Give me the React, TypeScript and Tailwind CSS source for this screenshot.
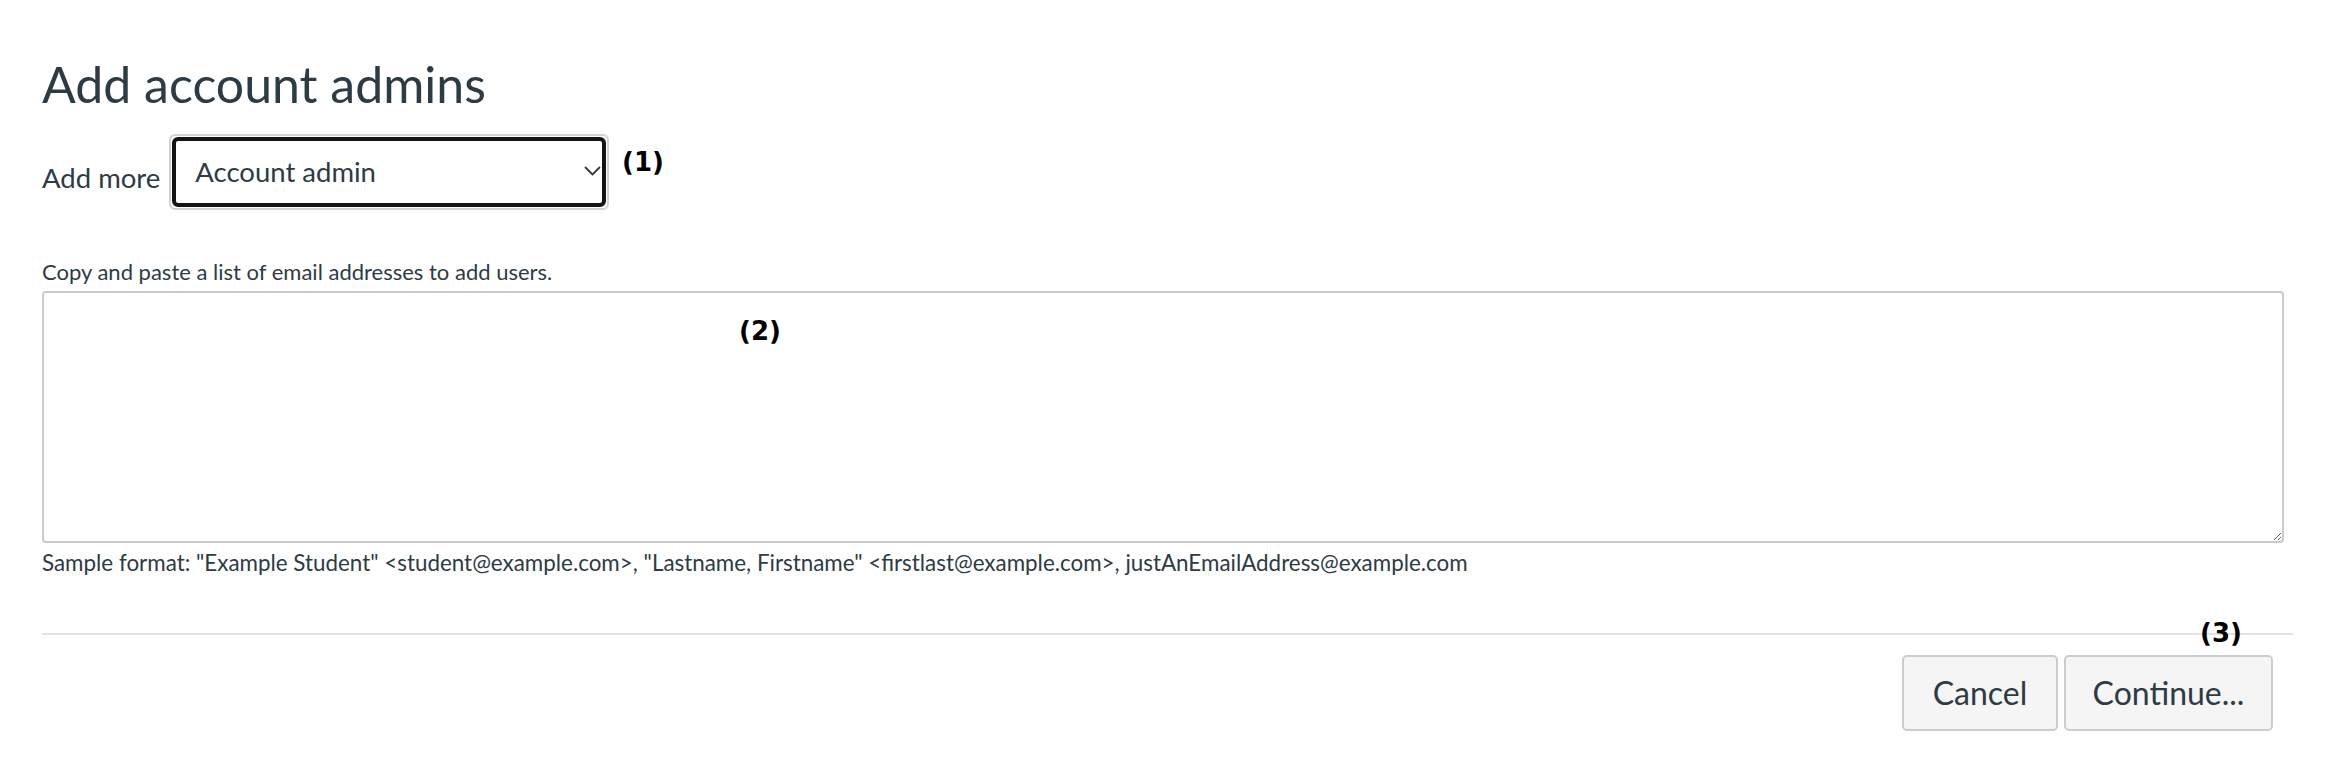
import React from "react";

export default function App() {
  const lato = { fontFamily: "Lato, 'Noto Sans', sans-serif" };
  const dejavu = { fontFamily: "'DejaVu Sans', sans-serif" };
  return (
    <div
      className="relative w-[2328px] h-[766px] bg-white pl-[42px] pt-[54px] text-[#2d3b45]"
      style={lato}
    >
      <h1 className="text-[50px] leading-[60px] font-normal">Add account admins</h1>

      <div className="flex items-start mt-[20px]">
        <span className="text-[27.5px] leading-[32px] mt-[28px]">Add more</span>
        <div className="ml-[9px] w-[440px] h-[76px] border-2 border-[#d2d2d2] rounded-[6px] p-[1px]">
          <div className="h-full border-[4px] border-[#141414] rounded-[6px] flex items-center justify-between pl-[19px] pr-[1px]">
            <span className="text-[27.5px] leading-[32px]">Account admin</span>
            <svg width="17" height="10" viewBox="0 0 17 10" className="mt-[-2px]">
              <path d="M1 1 L8.5 8.5 L16 1" fill="none" stroke="#2d3b45" strokeWidth="1.8" />
            </svg>
          </div>
        </div>
      </div>

      <p className="mt-[50px] text-[22px] leading-[24px]">
        Copy and paste a list of email addresses to add users.
      </p>
      <textarea
        className="block mt-[7px] w-[2242px] h-[252px] border-2 border-[#c7cbcf] rounded-[4px] bg-white outline-none"
        defaultValue=""
      />
      <p className="mt-[8px] text-[22.4px] leading-[24px]">
        Sample format: "Example Student" &lt;student@example.com&gt;, "Lastname, Firstname" &lt;firstlast@example.com&gt;, justAnEmailAddress@example.com
      </p>

      <div className="mt-[58px] h-[2px] w-[2251px] bg-[#e3e3e3]" />

      <div className="flex justify-end gap-[6px] w-[2251px] pr-[20px] mt-[20px]">
        <button className="w-[156px] h-[76px] bg-[#f5f5f5] border-2 border-[#c9cdd1] rounded-[5px] text-[32px] leading-[40px] text-[#2d3b45]">
          Cancel
        </button>
        <button className="w-[209px] h-[76px] bg-[#f5f5f5] border-2 border-[#c9cdd1] rounded-[5px] text-[32px] leading-[40px] text-[#2d3b45]">
          Continue...
        </button>
      </div>

      <span
        className="absolute left-[622px] top-[147px] text-[26px] leading-[30px] font-bold text-black"
        style={dejavu}
      >
        (1)
      </span>
      <span
        className="absolute left-[739px] top-[316px] text-[26px] leading-[30px] font-bold text-black"
        style={dejavu}
      >
        (2)
      </span>
      <span
        className="absolute left-[2200px] top-[618px] text-[26px] leading-[30px] font-bold text-black"
        style={dejavu}
      >
        (3)
      </span>
    </div>
  );
}
